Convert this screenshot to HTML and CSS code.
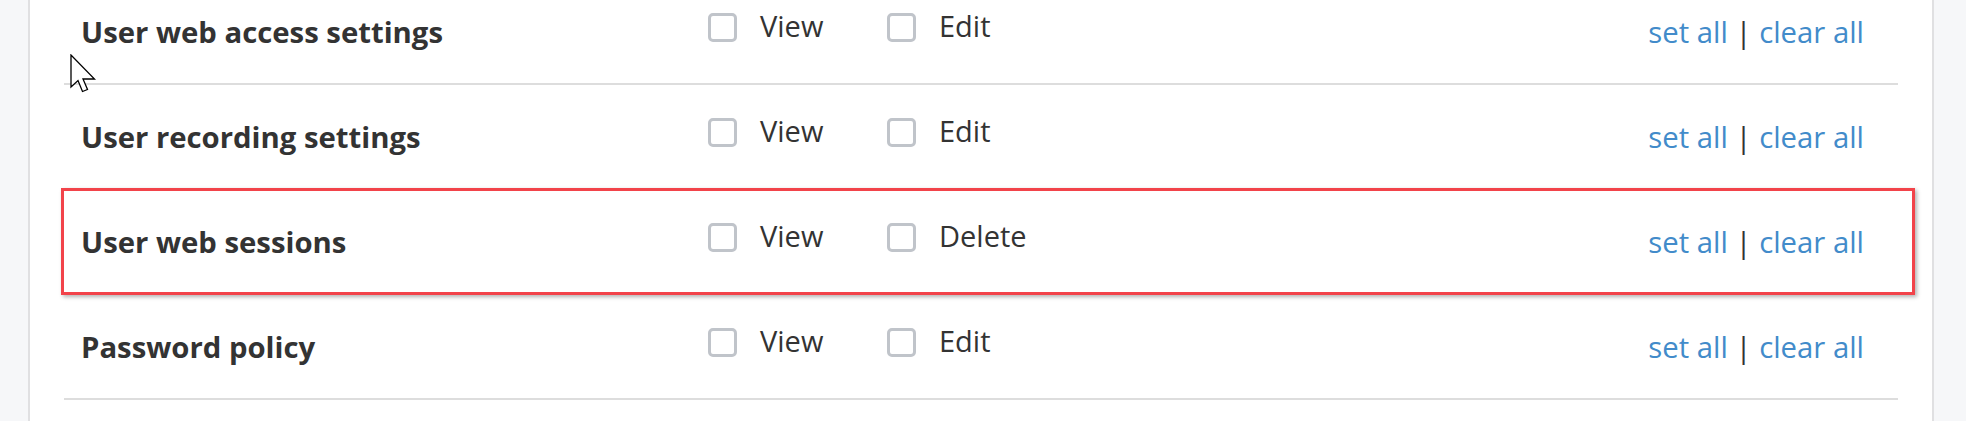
FILE: index.html
```html
<!DOCTYPE html>
<html lang="en">
<head>
  <meta charset="UTF-8" />
  <title>Permissions | Web Admin</title>
  <meta name="viewport" content="width=device-width, initial-scale=1.0"/>
  <link rel="stylesheet" href="styles.css">
</head>
<body>
  <div class="panel">
    <div class="perm-list">
      <div class="perm-row">
        <div class="perm-name">User web access settings</div>
        <label class="opt"><input type="checkbox"><span>View</span></label>
        <label class="opt"><input type="checkbox"><span>Edit</span></label>
        <div class="perm-links"><a href="#">set all</a> | <a href="#">clear all</a></div>
      </div>
      <div class="perm-row">
        <div class="perm-name">User recording settings</div>
        <label class="opt"><input type="checkbox"><span>View</span></label>
        <label class="opt"><input type="checkbox"><span>Edit</span></label>
        <div class="perm-links"><a href="#">set all</a> | <a href="#">clear all</a></div>
      </div>
      <div class="perm-row">
        <div class="perm-name">User web sessions</div>
        <label class="opt"><input type="checkbox"><span>View</span></label>
        <label class="opt"><input type="checkbox"><span>Delete</span></label>
        <div class="perm-links"><a href="#">set all</a> | <a href="#">clear all</a></div>
      </div>
      <div class="perm-row">
        <div class="perm-name">Password policy</div>
        <label class="opt"><input type="checkbox"><span>View</span></label>
        <label class="opt"><input type="checkbox"><span>Edit</span></label>
        <div class="perm-links"><a href="#">set all</a> | <a href="#">clear all</a></div>
      </div>
    </div>

    <!-- highlight around the row -->
    <div class="highlight"></div>

    <svg class="cursor" width="28" height="40" viewBox="0 0 28 40">
      <path d="M1 1 V33 L8 26.5 L12.5 37.5 L17.5 35.5 L13 25 H24.5 Z" fill="#fff" stroke="#000" stroke-width="1.3" stroke-linejoin="miter"/>
    </svg>
  </div>
</body>
</html>
```

FILE: styles.css
```css
body {
  margin: 0;
  background-color: #f6f7f9;
  font-family: "Open Sans", "DejaVu Sans", sans-serif;
  color: #333;
  height: 421px;
  overflow: hidden;
}

.panel {
  position: relative;
  margin: 0 32px 0 28px;
  padding: 0 34px;
  height: 421px;
  background: #fff;
  border-left: 2px solid #e0e0e2;
  border-right: 2px solid #e0e0e2;
  overflow: hidden;
}

.perm-list {
  margin-top: -20px;
}

.perm-row {
  display: grid;
  grid-template-columns: 627px 179px 1fr auto;
  align-items: center;
  height: 103px;
  padding: 0 34px 0 17px;
  border-bottom: 2px solid #dddddd;
}

.perm-name {
  font-size: 29.3px;
  font-weight: 700;
  line-height: 40px;
}

.opt {
  display: flex;
  align-items: center;
  gap: 23px;
  margin-bottom: 9px;
  font-size: 29px;
  line-height: 29px;
  cursor: pointer;
}

.opt span {
  margin-bottom: 4px;
}

.opt input {
  appearance: none;
  -webkit-appearance: none;
  margin: 0;
  width: 29px;
  height: 29px;
  border: 3px solid #c0c4ca;
  border-radius: 5px;
  background: #fff;
  box-sizing: border-box;
}

.perm-links {
  font-size: 29.3px;
  line-height: 40px;
  white-space: nowrap;
}

.perm-links a {
  color: #428bca;
  text-decoration: none;
}

.highlight {
  position: absolute;
  left: 31px;
  top: 188px;
  width: 1854px;
  height: 107px;
  box-sizing: border-box;
  border: 3px solid #f2434a;
  box-shadow: 2px 2px 4px rgba(0, 0, 0, 0.3);
  pointer-events: none;
}

.cursor {
  position: absolute;
  left: 40px;
  top: 54px;
}
```
